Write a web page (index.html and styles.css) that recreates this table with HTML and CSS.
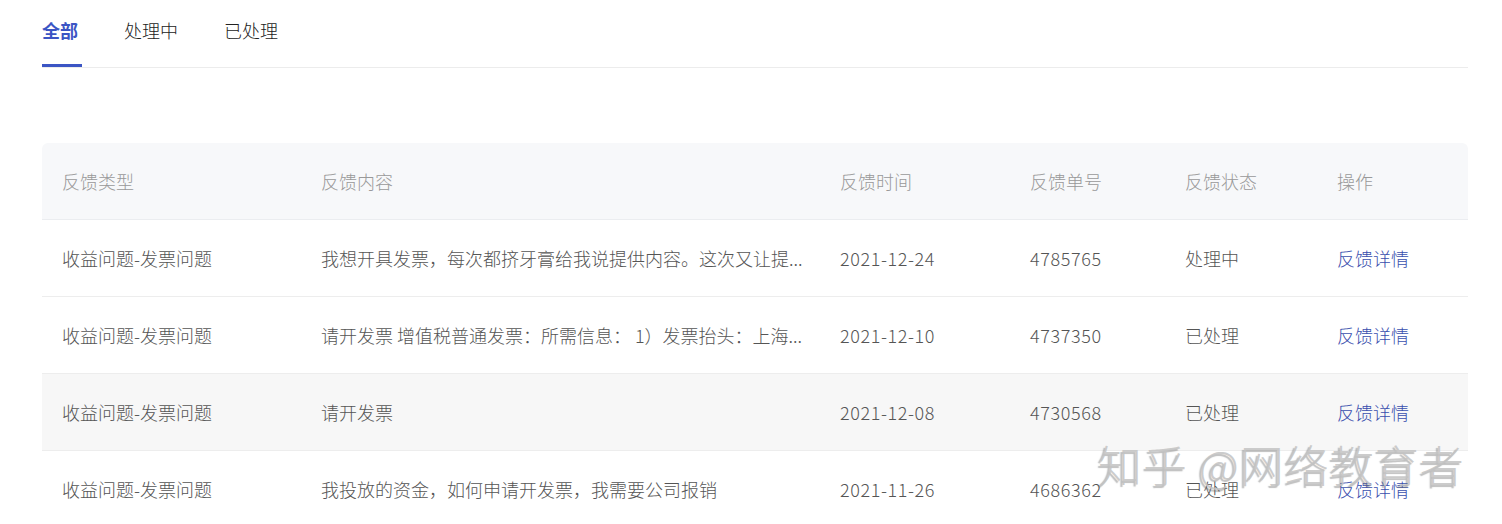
FILE: index.html
```html
<!DOCTYPE html>
<html lang="zh-CN">
<head>
<meta charset="utf-8">
<title>反馈记录</title>
<link rel="stylesheet" href="styles.css">
</head>
<body>
<div class="page">
  <nav class="tabs">
    <a class="tab active">全部</a>
    <a class="tab">处理中</a>
    <a class="tab">已处理</a>
  </nav>
  <table class="list">
    <colgroup>
      <col class="c-type"><col class="c-content"><col class="c-time"><col class="c-no"><col class="c-status"><col class="c-op">
    </colgroup>
    <thead>
      <tr><th>反馈类型</th><th>反馈内容</th><th>反馈时间</th><th>反馈单号</th><th>反馈状态</th><th>操作</th></tr>
    </thead>
    <tbody>
      <tr><td>收益问题-发票问题</td><td>我想开具发票，每次都挤牙膏给我说提供内容。这次又让提...</td><td class="num">2021-12-24</td><td class="num">4785765</td><td>处理中</td><td><a class="link">反馈详情</a></td></tr>
      <tr><td>收益问题-发票问题</td><td>请开发票 增值税普通发票：所需信息： 1）发票抬头：上海...</td><td class="num">2021-12-10</td><td class="num">4737350</td><td>已处理</td><td><a class="link">反馈详情</a></td></tr>
      <tr class="hover"><td>收益问题-发票问题</td><td>请开发票</td><td class="num">2021-12-08</td><td class="num">4730568</td><td>已处理</td><td><a class="link">反馈详情</a></td></tr>
      <tr><td>收益问题-发票问题</td><td>我投放的资金，如何申请开发票，我需要公司报销</td><td class="num">2021-11-26</td><td class="num">4686362</td><td>已处理</td><td><a class="link">反馈详情</a></td></tr>
    </tbody>
  </table>
  <div class="watermark">知乎 @网络教育者</div>
</div>
</body>
</html>
```
FILE: styles.css
```css
* { box-sizing: border-box; }
html, body { margin: 0; padding: 0; background: #fff; }
body {
  font-family: "Noto Sans CJK SC", "Noto Sans", sans-serif;
  font-size: 18px;
  font-weight: 300;
  color: #555;
  overflow: hidden;
}
.page {
  position: relative;
  padding: 0 34px 0 42px;
}
.tabs {
  display: flex;
  gap: 46px;
  border-bottom: 1px solid #ececec;
  height: 68px;
}
.tab {
  position: relative;
  display: block;
  padding-top: 18px;
  line-height: 24px;
  color: #222;
  font-size: 18px;
  font-weight: 300;
  cursor: pointer;
}
.tab.active {
  color: #3b55c4;
  font-weight: 700;
}
.tab.active::after {
  content: "";
  position: absolute;
  left: 0;
  bottom: 0;
  width: 40px;
  height: 3px;
  background: #3b55c4;
}
.list {
  margin-top: 75px;
  width: 100%;
  border-collapse: collapse;
  table-layout: fixed;
}
.c-type { width: 259px; }
.c-content { width: 519px; }
.c-time { width: 190px; }
.c-no { width: 155px; }
.c-status { width: 152px; }
.c-op { width: auto; }
th, td {
  text-align: left;
  padding: 0 20px;
  font-weight: 300;
  line-height: 24px;
  white-space: nowrap;
}
th {
  height: 76px;
  background: #f7f8fa;
  color: #999;
  border-bottom: 1px solid #ebedf0;
}
th:first-child { border-top-left-radius: 6px; }
th:last-child { border-top-right-radius: 6px; }
td {
  height: 77px;
  color: #555;
  border-bottom: 1px solid #ededed;
}
td.num { letter-spacing: 0.6px; }
tr.hover td { background: #f7f7f7; }
.link {
  color: #3a4fae;
  cursor: pointer;
}
.watermark {
  position: absolute;
  left: 1098px;
  top: 436px;
  font-size: 44px;
  font-weight: 300;
  line-height: 56px;
  letter-spacing: 1px;
  color: rgba(195, 195, 195, 0.85);
  text-shadow: -2px 2px 1px rgba(110, 110, 110, 0.45);
  white-space: nowrap;
  pointer-events: none;
}
```
